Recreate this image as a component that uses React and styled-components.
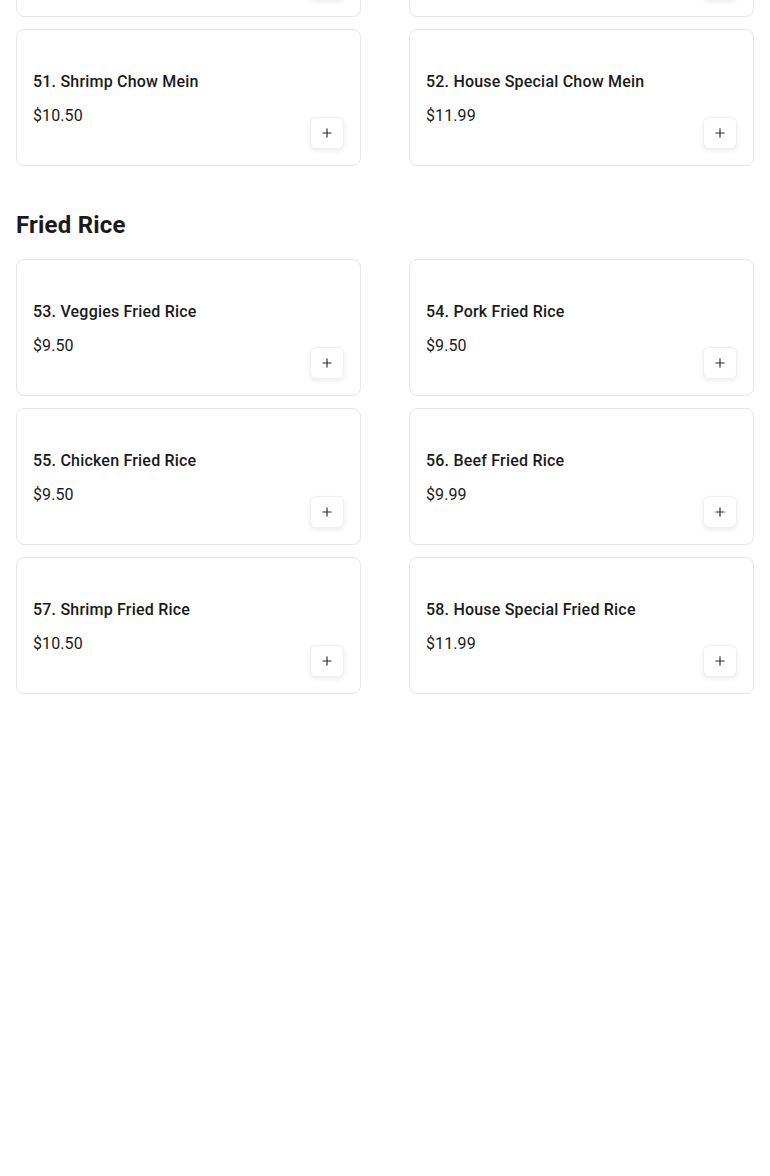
import styled, { createGlobalStyle } from "styled-components";
import { Plus } from "lucide-react";

const GlobalStyle = createGlobalStyle`
  body {
    margin: 0;
    background: #ffffff;
    font-family: Roboto, "Liberation Sans", Arial, sans-serif;
    color: #1a1a1a;
  }
`;

const Page = styled.main`
  padding: 0 16px;
  /* the view is scrolled: only the bottom of the first row shows */
  margin-top: -120px;
`;

const Section = styled.section`
  & + & {
    margin-top: 43px;
  }
`;

const SectionTitle = styled.h2`
  margin: 0 0 18px;
  font-size: 24px;
  line-height: 32px;
  font-weight: 700;
  letter-spacing: 0.2px;
  color: #1a1a1a;
`;

const Grid = styled.div`
  display: grid;
  grid-template-columns: 1fr 1fr;
  column-gap: 48px;
  row-gap: 12px;
`;

const Card = styled.div`
  box-sizing: border-box;
  height: 137px;
  padding: 16px;
  border: 1px solid #e6e6e6;
  border-radius: 8px;
  background: #fff;
  display: flex;
  flex-direction: column;
  justify-content: flex-end;
`;

const ItemName = styled.div`
  font-size: 16px;
  line-height: 24px;
  font-weight: 500;
  letter-spacing: 0.2px;
  color: #1a1a1a;
  margin-bottom: 10px;
`;

const Footer = styled.div`
  display: flex;
  justify-content: ${(p) => (p.$end ? "flex-end" : "space-between")};
  align-items: flex-start;
`;

const Price = styled.div`
  font-size: 16px;
  line-height: 24px;
  letter-spacing: 0.1px;
  color: #1a1a1a;
`;

const AddButton = styled.button`
  margin-top: 13px;
  width: 34px;
  height: 32px;
  padding: 0;
  display: flex;
  align-items: center;
  justify-content: center;
  border: 1px solid #efefef;
  border-radius: 6px;
  background: #fff;
  color: #2a2a2a;
  box-shadow: 0 2px 5px rgba(0, 0, 0, 0.08);
  cursor: pointer;
`;

const menu = [
  {
    title: "Chow Mein",
    scrolledPast: true,
    items: [
      { id: 49, peek: true },
      { id: 50, peek: true },
      { id: 51, name: "51. Shrimp Chow Mein", price: "$10.50" },
      { id: 52, name: "52. House Special Chow Mein", price: "$11.99" },
    ],
  },
  {
    title: "Fried Rice",
    items: [
      { id: 53, name: "53. Veggies Fried Rice", price: "$9.50" },
      { id: 54, name: "54. Pork Fried Rice", price: "$9.50" },
      { id: 55, name: "55. Chicken Fried Rice", price: "$9.50" },
      { id: 56, name: "56. Beef Fried Rice", price: "$9.99" },
      { id: 57, name: "57. Shrimp Fried Rice", price: "$10.50" },
      { id: 58, name: "58. House Special Fried Rice", price: "$11.99" },
    ],
  },
];

export default function App() {
  return (
    <>
      <GlobalStyle />
      <Page>
        {menu.map((section) => (
          <Section key={section.title}>
            {!section.scrolledPast && (
              <SectionTitle>{section.title}</SectionTitle>
            )}
            <Grid>
              {section.items.map((item) =>
                item.peek ? (
                  // only the lower edge of these cards is in view
                  <Card key={item.id}>
                    <Footer $end>
                      <AddButton aria-label="Add item">
                        <Plus size={14} strokeWidth={2} />
                      </AddButton>
                    </Footer>
                  </Card>
                ) : (
                  <Card key={item.id}>
                    <ItemName>{item.name}</ItemName>
                    <Footer>
                      <Price>{item.price}</Price>
                      <AddButton aria-label={`Add ${item.name}`}>
                        <Plus size={14} strokeWidth={2} />
                      </AddButton>
                    </Footer>
                  </Card>
                )
              )}
            </Grid>
          </Section>
        ))}
      </Page>
    </>
  );
}
